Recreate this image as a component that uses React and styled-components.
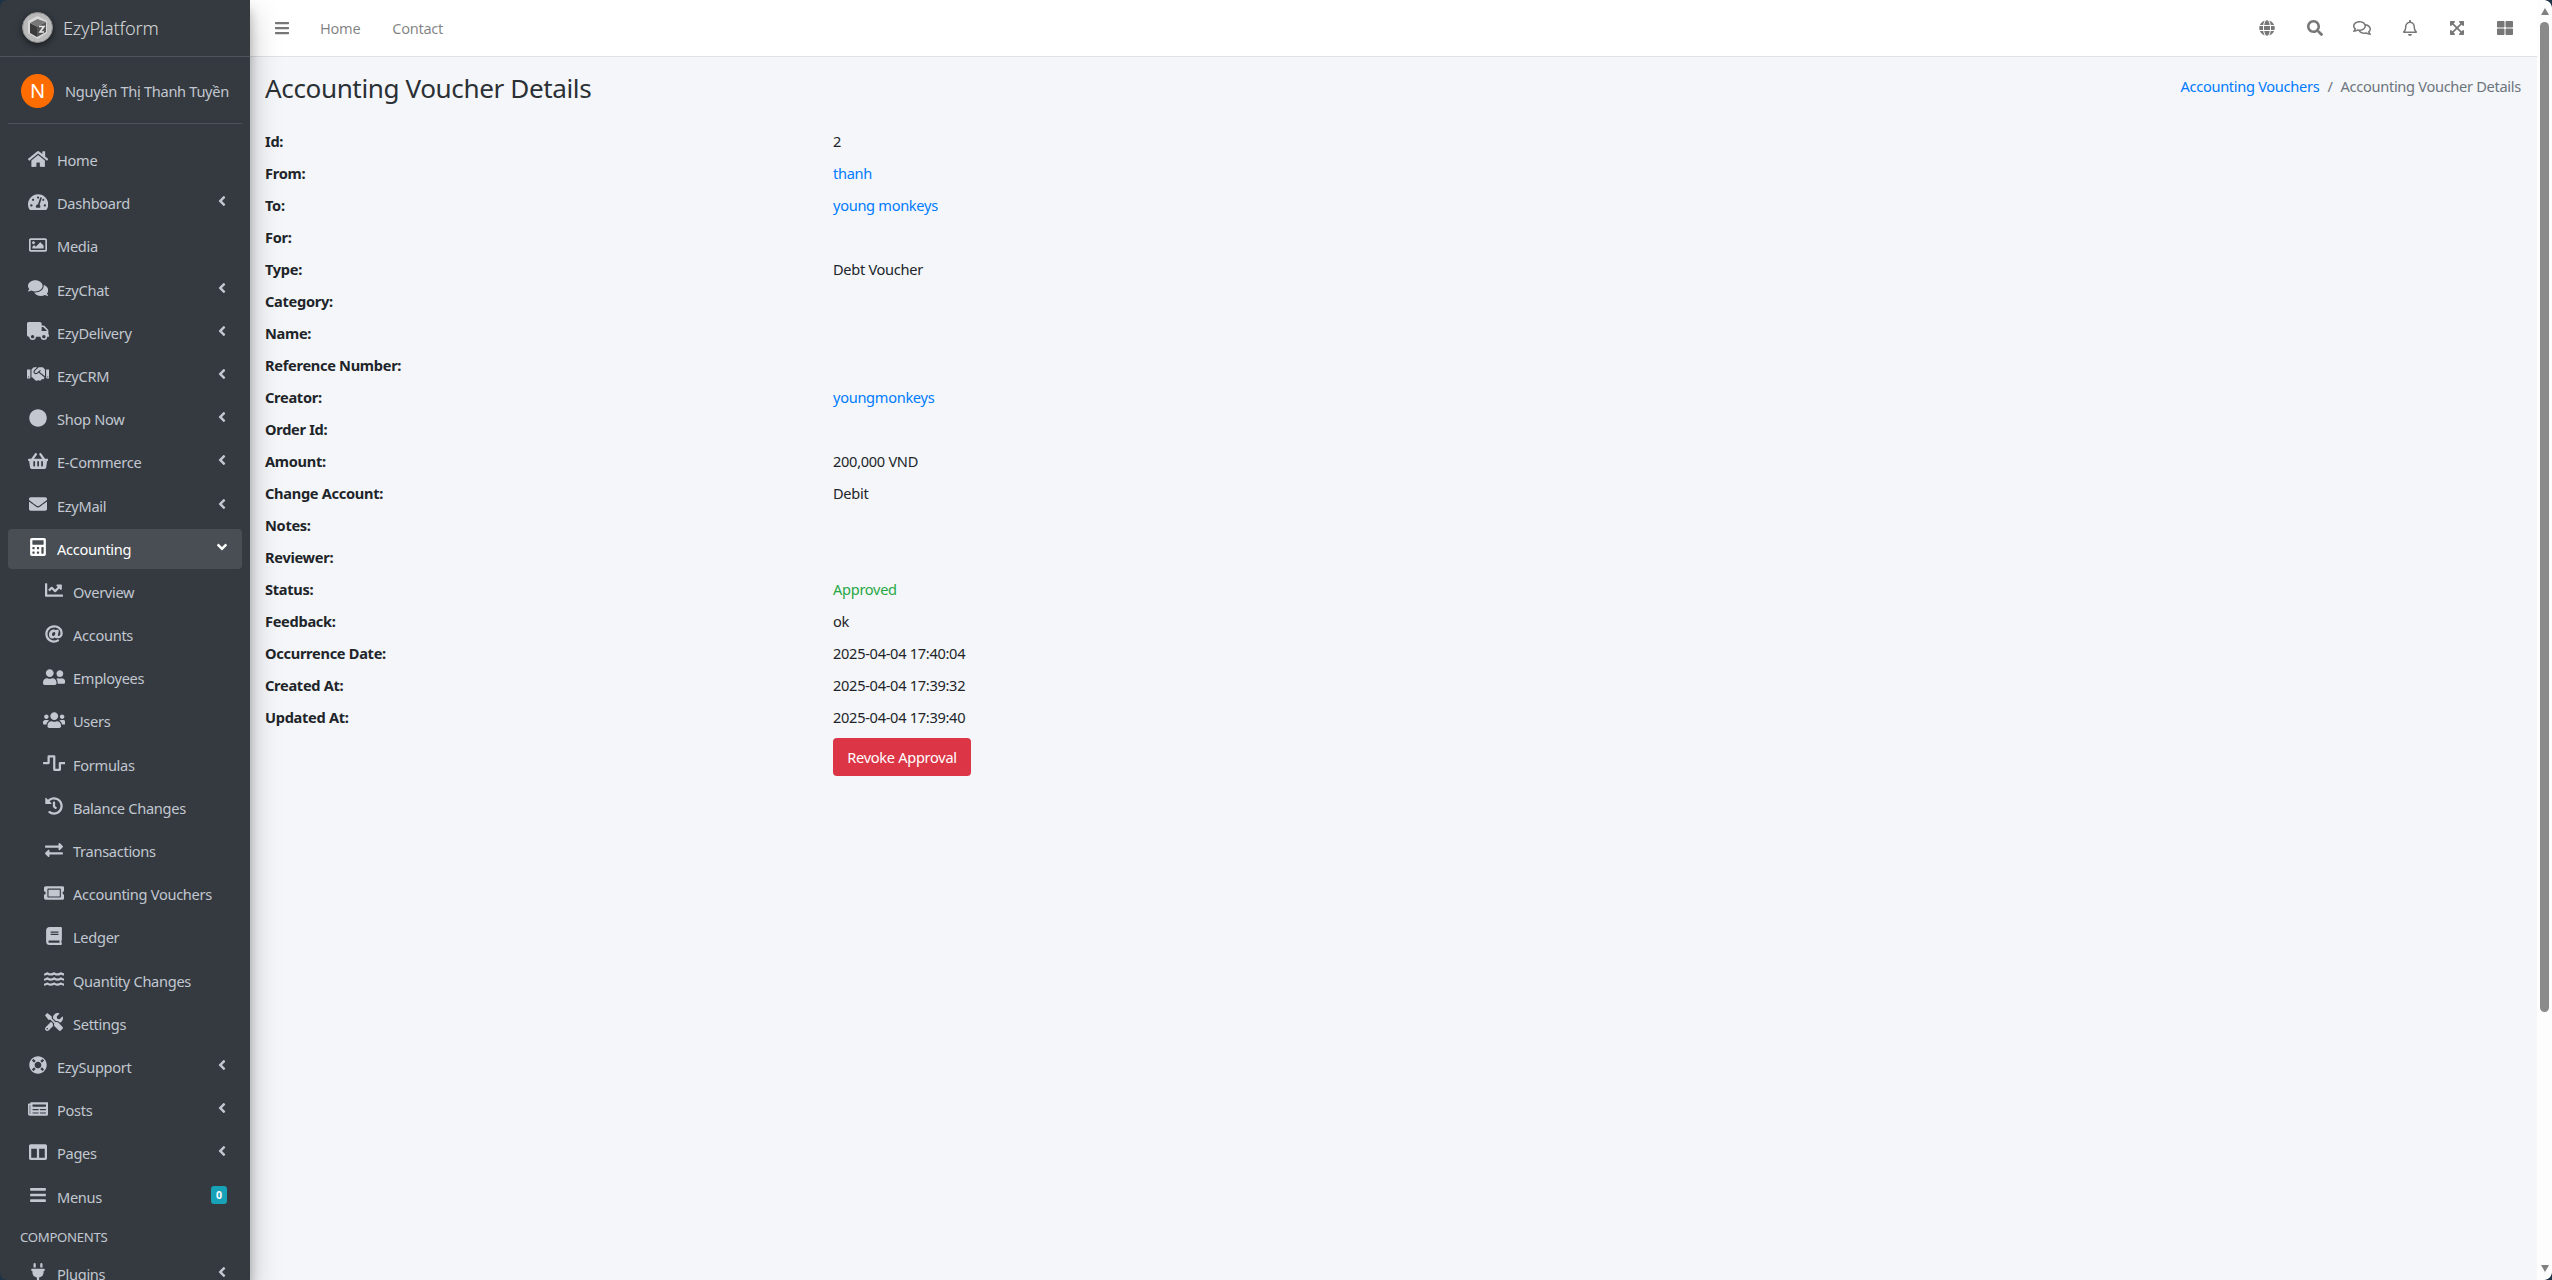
import React from 'react';
import styled, { createGlobalStyle } from 'styled-components';
import {
  FaHome, FaTachometerAlt, FaRegImage, FaComments, FaTruck, FaHandshake, FaCircle, FaShoppingBasket,
  FaEnvelope, FaCalculator, FaChartLine, FaAt, FaUserFriends, FaUsers, FaWaveSquare, FaHistory,
  FaExchangeAlt, FaTicketAlt, FaBook, FaWater, FaTools, FaLifeRing, FaNewspaper, FaColumns, FaBars,
  FaPlug, FaAngleLeft, FaAngleDown, FaGlobe, FaSearch, FaRegComments, FaRegBell, FaExpandArrowsAlt, FaThLarge,
} from 'react-icons/fa';

const FONT = `"Noto Sans", "Open Sans", sans-serif`;

const Global = createGlobalStyle`
  html, body { margin: 0; padding: 0; overflow: hidden; }
  body { background: #f4f6f9; font-family: ${FONT}; font-size: 14.6px; letter-spacing: -0.3px; line-height: 24px; color: #212529; }
  * { box-sizing: border-box; }
`;

const Shell = styled.div`position: relative; display: flex; height: 100vh; overflow: hidden;`;

const Sidebar = styled.aside`
  position: relative; z-index: 5; flex: 0 0 250px; width: 250px; height: 100%; overflow: hidden;
  background: #343a40; color: #c2c7d0;
  box-shadow: 0 14px 28px rgba(0,0,0,.25), 0 10px 10px rgba(0,0,0,.22);
`;
const Brand = styled.div`
  height: 57px; display: flex; align-items: center; gap: 9px; padding: 0 0 1px 21px;
  border-bottom: 1px solid #4b545c; color: rgba(255,255,255,.8); font-size: 18.2px; font-weight: 300; letter-spacing: -0.2px;
`;
const UserPanel = styled.div`
  margin: 0 8px; height: 67px; display: flex; align-items: center; gap: 11px; padding: 1px 0 0 13px;
  border-bottom: 1px solid #4b545c; white-space: nowrap;
`;
const Avatar = styled.div`
  width: 33px; height: 34px; border-radius: 50%; background: #ff6d00; color: #fff;
  display: flex; align-items: center; justify-content: center; font-size: 20px;
`;
const Nav = styled.nav`display: flex; flex-direction: column; padding-top: 16px;`;
const NavRow = styled.div`
  flex: none; height: 40px; margin: 0 8px 3.2px; padding: 0 16px 0 ${p => (p.$sub ? 32 : 16)}px; border-radius: 4px;
  display: flex; align-items: center; white-space: nowrap;
  background: ${p => (p.$active ? 'rgba(255,255,255,.1)' : 'transparent')};
  color: ${p => (p.$active ? '#fff' : '#c2c7d0')};
`;
const NavIcon = styled.span`
  flex: 0 0 28px; margin-right: 5px; margin-top: -3px; display: flex; align-items: center; justify-content: center; font-size: 18px;
  svg { width: ${p => p.$ratio || 1}em; height: 1em; }
`;
const Caret = styled.span`margin-left: auto; margin-right: -4px; margin-top: -4px; display: flex; font-size: 16px;`;
const Badge = styled.span`
  margin-left: auto; margin-right: -1px; margin-top: -3px; width: 16px; height: 18px; border-radius: 3px; background: #17a2b8; color: #fff;
  font-size: 10.5px; font-weight: 700; line-height: 18px; text-align: center; letter-spacing: 0;
`;
const NavHeader = styled.div`flex: none; height: 34px; padding: 5px 12px 0 20px; font-size: 13.2px; line-height: 24px;`;

const Main = styled.div`flex: 1; min-width: 0;`;
const Topbar = styled.header`
  height: 57px; background: #fff; border-bottom: 1px solid #dee2e6; display: flex; align-items: center;
  padding: 0 22px 0 24px; color: rgba(0,0,0,.5);
`;
const Burger = styled.span`display: flex; font-size: 16px; width: 46px; color: #777;`;
const TopLink = styled.span`margin-right: 32px;`;
const TopIcons = styled.div`margin-left: auto; display: flex; align-items: center; gap: 27.6px; font-size: 16px; color: #777;`;
const TopIcon = styled.span`
  display: flex; width: 20px; justify-content: center;
  svg { width: ${p => p.$ratio || 1}em; height: 1em; }
`;

const Content = styled.main`padding: 14px 16px 0 15px;`;
const Head = styled.div`display: flex; justify-content: space-between; height: 58px;`;
const Title = styled.h1`margin: 0; font-size: 26.1px; font-weight: 400; line-height: 34px; letter-spacing: -0.4px; color: #2b3035;`;
const Crumbs = styled.div`display: flex; gap: 8px; height: 28px; padding-top: 3px; color: #6c757d;`;
const Link = styled.a`color: #007bff; text-decoration: none;`;
const Detail = styled.div`display: grid; grid-template-columns: 568px 1fr; grid-auto-rows: 32px;`;
const Label = styled.div`font-weight: 700; color: #212529;`;
const Value = styled.div`color: ${p => p.$ok ? '#28a745' : '#212529'};`;
const Revoke = styled.button`
  display: block; margin: 1px 0 0 568px; width: 138px; height: 38px; border: 0; border-radius: 4px; background: #dc3545; color: #fff;
  font: inherit; letter-spacing: -0.3px; padding: 0;
`;

const ScrollGutter = styled.div`
  flex: 0 0 15px; height: 100%; background: #fdfdfd; display: flex; flex-direction: column; align-items: center; padding: 8px 3px; 
`;
const Arrow = styled.div`
  flex: none; width: 0; height: 0; border-left: 4.5px solid transparent; border-right: 4.5px solid transparent;
  ${p => p.$down ? 'border-top: 7px solid #808080;' : 'border-bottom: 7px solid #808080;'}
`;
const Thumb = styled.div`flex: none; width: 9px; height: 990px; margin: 7px 0 auto; background: #8a8a8a; border-radius: 4.5px;`;

const CORNER = {
  tl: ['top: 0; left: 0;', '100% 100%'],
  tr: ['top: 0; right: 0;', '0 100%'],
  bl: ['bottom: 0; left: 0;', '100% 0'],
  br: ['bottom: 0; right: 0;', '0 0'],
};
const Corner = styled.div`
  position: absolute; z-index: 9; width: 8px; height: 8px; ${p => CORNER[p.$at][0]}
  background: radial-gradient(circle at ${p => CORNER[p.$at][1]}, transparent 7.5px, #1f3347 8.2px);
`;

const Logo = () => (
  <svg width="33" height="33" viewBox="0 0 33 33" style={{ filter: 'drop-shadow(0 2px 3px rgba(0,0,0,.55))', flex: 'none' }}>
    <circle cx="16.5" cy="16.5" r="15" fill="#b9b9b9" />
    <circle cx="16.5" cy="16.5" r="15" fill="none" stroke="#8e8e8e" strokeWidth="1" />
    <path d="M16.5 5 L26 10 V22 L16.5 28 L7 22 V10 Z" fill="#d8d8d8" />
    <path d="M9 12 L16 15.5 V26 L9 22 Z" fill="#3c3c3c" />
    <path d="M16 15.5 L25 11 V21 L16 26 Z" fill="#555" />
    <path d="M9 12 L16.5 8 L25 11 L16 15.5 Z" fill="#777" />
    <path d="M18 15.5 H23 L19 21 H23" fill="none" stroke="#e8e8e8" strokeWidth="1.6" />
  </svg>
);

const sub = (icon, label, ratio) => ({ icon, label, ratio, sub: true });
const top = (icon, label, ratio, caret = true) => ({ icon, label, ratio, caret });

const NAV = [
  top(FaHome, 'Home', 1.125, false), top(FaTachometerAlt, 'Dashboard', 1.125), top(FaRegImage, 'Media', 1, false), top(FaComments, 'EzyChat', 1.125),
  top(FaTruck, 'EzyDelivery', 1.25), top(FaHandshake, 'EzyCRM', 1.25), top(FaCircle, 'Shop Now'), top(FaShoppingBasket, 'E-Commerce', 1.125),
  top(FaEnvelope, 'EzyMail'), { icon: FaCalculator, label: 'Accounting', active: true },
  sub(FaChartLine, 'Overview'), sub(FaAt, 'Accounts'), sub(FaUserFriends, 'Employees', 1.25), sub(FaUsers, 'Users', 1.25),
  sub(FaWaveSquare, 'Formulas', 1.25), sub(FaHistory, 'Balance Changes'), sub(FaExchangeAlt, 'Transactions'),
  sub(FaTicketAlt, 'Accounting Vouchers', 1.125), sub(FaBook, 'Ledger'), sub(FaWater, 'Quantity Changes', 1.125), sub(FaTools, 'Settings'),
  top(FaLifeRing, 'EzySupport'), top(FaNewspaper, 'Posts', 1.125), top(FaColumns, 'Pages'), { icon: FaBars, label: 'Menus', badge: '0' },
  { header: 'COMPONENTS' }, top(FaPlug, 'Plugins'),
];

const ROWS = [
  ['Id:', '2'], ['From:', 'thanh', 'link'], ['To:', 'young monkeys', 'link'], ['For:', ''], ['Type:', 'Debt Voucher'],
  ['Category:', ''], ['Name:', ''], ['Reference Number:', ''], ['Creator:', 'youngmonkeys', 'link'], ['Order Id:', ''],
  ['Amount:', '200,000 VND'], ['Change Account:', 'Debit'], ['Notes:', ''], ['Reviewer:', ''], ['Status:', 'Approved', 'ok'],
  ['Feedback:', 'ok'], ['Occurrence Date:', '2025-04-04 17:40:04'], ['Created At:', '2025-04-04 17:39:32'], ['Updated At:', '2025-04-04 17:39:40'],
];

const TOP_ICONS = [[FaGlobe], [FaSearch], [FaRegComments, 1.125], [FaRegBell], [FaExpandArrowsAlt], [FaThLarge]];

export default function App() {
  return (
    <>
      <Global />
      <Shell>
        <Sidebar>
          <Brand><Logo /><span>EzyPlatform</span></Brand>
          <UserPanel><Avatar>N</Avatar><span>Nguyễn Thị Thanh Tuyền</span></UserPanel>
          <Nav>
            {NAV.map((n, i) => n.header ? <NavHeader key={i}>{n.header}</NavHeader> : (
              <NavRow key={i} $sub={n.sub} $active={n.active}>
                <NavIcon $ratio={n.ratio}><n.icon /></NavIcon>
                <span>{n.label}</span>
                {n.caret && <Caret><FaAngleLeft /></Caret>}
                {n.active && <Caret><FaAngleDown /></Caret>}
                {n.badge && <Badge>{n.badge}</Badge>}
              </NavRow>
            ))}
          </Nav>
        </Sidebar>
        <Main>
          <Topbar>
            <Burger><FaBars /></Burger>
            <TopLink>Home</TopLink>
            <TopLink>Contact</TopLink>
            <TopIcons>{TOP_ICONS.map(([I, r], i) => <TopIcon key={i} $ratio={r}><I /></TopIcon>)}</TopIcons>
          </Topbar>
          <Content>
            <Head>
              <Title>Accounting Voucher Details</Title>
              <Crumbs><Link>Accounting Vouchers</Link><span>/</span><span>Accounting Voucher Details</span></Crumbs>
            </Head>
            <Detail>
              {ROWS.map(([l, v, k]) => (
                <React.Fragment key={l}>
                  <Label>{l}</Label>
                  <Value $ok={k === 'ok'}>{k === 'link' ? <Link>{v}</Link> : v}</Value>
                </React.Fragment>
              ))}
            </Detail>
            <Revoke>Revoke Approval</Revoke>
          </Content>
        </Main>
        <ScrollGutter>
          <Arrow />
          <Thumb />
          <Arrow $down />
        </ScrollGutter>
        <Corner $at="tl" /><Corner $at="tr" /><Corner $at="bl" /><Corner $at="br" />
      </Shell>
    </>
  );
}
